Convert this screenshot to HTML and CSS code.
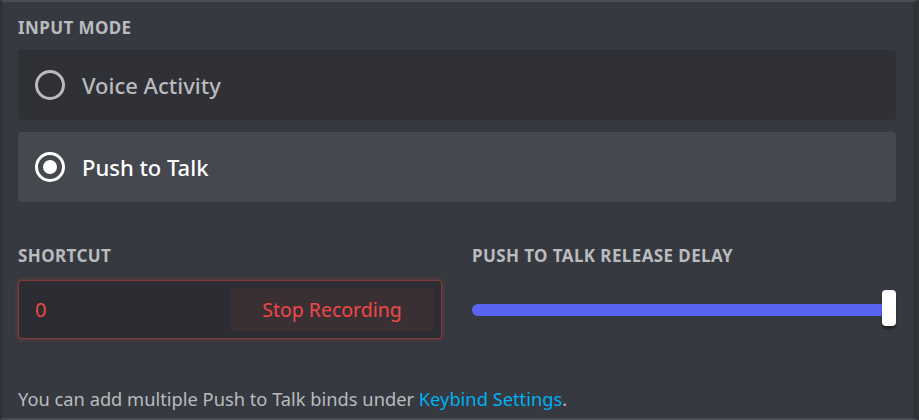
FILE: index.html
```html
<!DOCTYPE html>
<html lang="en">
<head>
    <meta charset="UTF-8">
    <meta name="viewport" content="width=device-width, initial-scale=1.0">
    <title>Voice Settings</title>
    <link rel="stylesheet" href="styles.css">
</head>
<body>
    <div class="panel">
        <h5 class="title">Input Mode</h5>

        <div class="radio-group">
            <div class="radio-item">
                <span class="radio"></span>
                <span class="radio-label">Voice Activity</span>
            </div>
            <div class="radio-item selected">
                <span class="radio checked"></span>
                <span class="radio-label">Push to Talk</span>
            </div>
        </div>

        <div class="columns">
            <div class="column">
                <h5 class="title">Shortcut</h5>
                <div class="keybind recording">
                    <div class="keybind-value">0</div>
                    <button class="keybind-button">Stop Recording</button>
                </div>
            </div>
            <div class="column">
                <h5 class="title">Push to Talk Release Delay</h5>
                <div class="slider">
                    <div class="slider-bar"></div>
                    <div class="slider-grabber"></div>
                </div>
            </div>
        </div>

        <div class="note">
            You can add multiple Push to Talk binds under <a href="#">Keybind Settings</a>.
        </div>
    </div>
</body>
</html>
```

FILE: styles.css
```css
html, body {
    margin: 0;
    height: 100%;
}

body {
    background: #36393f;
    font-family: "Noto Sans", "Open Sans", sans-serif;
}

.panel {
    box-sizing: border-box;
    height: 420px;
    padding: 16px 17px 0 15px;
    border-top: 2px solid #4a4d54;
    border-bottom: 2px solid #4a4d54;
    border-left: 3px solid #303238;
    border-right: 6px solid #2f3136;
}

.title {
    margin: 0 0 12px;
    color: #b9bbbe;
    font-size: 17px;
    line-height: 20px;
    letter-spacing: 0.4px;
    font-weight: 700;
    text-transform: uppercase;
}

.radio-group {
    display: flex;
    flex-direction: column;
    gap: 12px;
}

.radio-item {
    display: flex;
    align-items: center;
    height: 70px;
    padding: 0 17px;
    background: #2f3136;
    border-radius: 4px;
}

.radio-item.selected {
    background: #45484f;
}

.radio {
    box-sizing: border-box;
    width: 30px;
    height: 30px;
    border: 3px solid #b9bbbe;
    border-radius: 50%;
    margin-right: 17px;
    flex-shrink: 0;
}

.radio.checked {
    border-color: #fff;
    display: flex;
    align-items: center;
    justify-content: center;
}

.radio.checked::after {
    content: "";
    width: 14px;
    height: 14px;
    border-radius: 50%;
    background: #fff;
}

.radio-label {
    color: #b9bbbe;
    font-size: 22px;
    font-weight: 500;
}

.selected .radio-label {
    color: #fff;
}

.columns {
    display: flex;
    gap: 30px;
    margin-top: 44px;
}

.column {
    flex: 1;
}

.columns .title {
    margin-bottom: 14px;
}

.keybind {
    display: flex;
    align-items: center;
    height: 59px;
    box-sizing: border-box;
    padding: 6px 7px 6px 16px;
    background: #2b2d32;
    border: 1px solid rgba(240, 71, 71, 0.45);
    border-radius: 4px;
    box-shadow: 0 0 5px rgba(240, 71, 71, 0.35);
}

.keybind-value {
    flex: 1;
    color: #f04747;
    font-size: 20px;
}

.keybind-button {
    width: 204px;
    height: 43px;
    border: none;
    border-radius: 3px;
    background: #3a3034;
    color: #f04747;
    font-family: inherit;
    font-size: 19.5px;
    cursor: pointer;
}

.slider {
    position: relative;
    height: 59px;
}

.slider-bar {
    position: absolute;
    left: 0;
    right: 10px;
    top: 24px;
    height: 12px;
    border-radius: 6px;
    background: #5865f2;
}

.slider-grabber {
    position: absolute;
    right: 0;
    top: 10px;
    width: 14px;
    height: 36px;
    border-radius: 4px;
    background: #fff;
    box-shadow: 0 3px 2px rgba(0, 0, 0, 0.4);
}

.note {
    margin-top: 47px;
    color: #b9bbbe;
    font-size: 18.3px;
}

.note a {
    color: #00b0f4;
    text-decoration: none;
}
```
